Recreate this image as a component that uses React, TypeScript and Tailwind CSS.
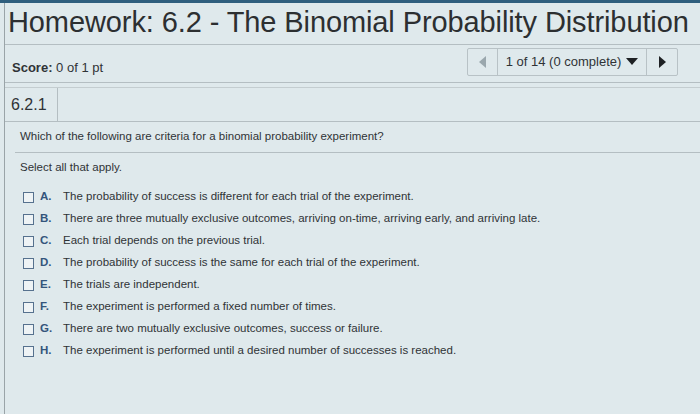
import React from 'react';

const options = [
  { key: 'A', text: 'The probability of success is different for each trial of the experiment.' },
  { key: 'B', text: 'There are three mutually exclusive outcomes, arriving on-time, arriving early, and arriving late.' },
  { key: 'C', text: 'Each trial depends on the previous trial.' },
  { key: 'D', text: 'The probability of success is the same for each trial of the experiment.' },
  { key: 'E', text: 'The trials are independent.' },
  { key: 'F', text: 'The experiment is performed a fixed number of times.' },
  { key: 'G', text: 'There are two mutually exclusive outcomes, success or failure.' },
  { key: 'H', text: 'The experiment is performed until a desired number of successes is reached.' },
];

export default function App() {
  return (
    <div
      className="w-[700px] h-[414px] overflow-hidden bg-[#dfe9ec] text-[#2f3336] border-t-[3px] border-[#2f5f7e]"
      style={{ fontFamily: '"Liberation Sans", Arial, sans-serif' }}
    >
      <div className="ml-[4px] h-full border-l border-[#9aa4a8] flex flex-col">
        <h1 className="pl-[3px] pt-[1px] h-[42px] text-[29px] leading-[36px] text-[#2c2f31] tracking-[-0.1px] border-b border-[#b4bec2] whitespace-nowrap">
          Homework: 6.2 - The Binomial Probability Distribution
        </h1>

        <div className="h-[38px] flex items-center justify-between pl-[7px] pr-[22px] border-b border-[#b4bec2]">
          <div className="text-[13px] pt-[8px]">
            <span className="font-bold">Score:</span> 0 of 1 pt
          </div>
          <div className="flex h-[28px] mb-[4px] border border-[#b8c2c6] rounded-[2px] text-[13px]">
            <div className="w-[30px] flex items-center justify-center border-r border-[#b8c2c6]">
              <span className="w-0 h-0 border-y-[6px] border-y-transparent border-r-[7px] border-r-[#9aa7ad]" />
            </div>
            <div className="w-[149px] flex items-center justify-center gap-[5px] border-r border-[#b8c2c6]">
              <span>1 of 14 (0 complete)</span>
              <span className="w-0 h-0 border-x-[6px] border-x-transparent border-t-[7px] border-t-[#1e2124]" />
            </div>
            <div className="w-[30px] flex items-center justify-center">
              <span className="w-0 h-0 border-y-[6px] border-y-transparent border-l-[7px] border-l-[#1e2124]" />
            </div>
          </div>
        </div>

        <div className="h-[35px] mt-[4px] flex border-b border-[#b4bec2] border-t border-t-[#c4cdd0]">
          <div className="w-[53px] pl-[6px] flex items-center text-[16px] border-r border-[#b4bec2]">6.2.1</div>
        </div>

        <div className="pl-[10px]">
          <div className="h-[31px] pl-[5px] flex items-center text-[11.5px] border-b border-[#b4bec2]">
            Which of the following are criteria for a binomial probability experiment?
          </div>
          <div className="h-[30px] pl-[5px] flex items-center text-[11.5px]">Select all that apply.</div>

          <div className="mt-[3px] pl-[8px] flex flex-col">
            {options.map((o) => (
              <div key={o.key} className="h-[22px] flex items-center text-[11.5px]">
                <span className="w-[11px] h-[11px] border border-[#56718e] bg-[#eef3f5] mr-[6px]" />
                <span className="w-[23px] font-bold text-[#34557c]">{o.key}.</span>
                <span>{o.text}</span>
              </div>
            ))}
          </div>
        </div>
      </div>
    </div>
  );
}
